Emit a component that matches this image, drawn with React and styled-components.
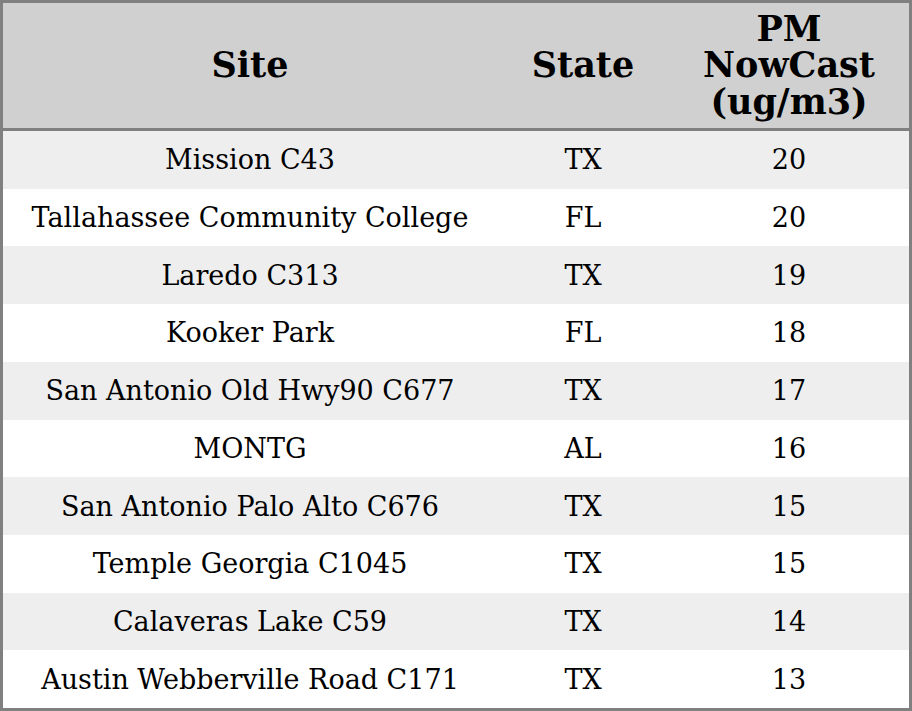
import styled, { createGlobalStyle } from "styled-components";

const GlobalStyle = createGlobalStyle`
    html, body {
        margin: 0;
        padding: 0;
        background: #ffffff;
    }
`;

const rows = [
    { site: "Mission C43", state: "TX", value: 20 },
    { site: "Tallahassee Community College", state: "FL", value: 20 },
    { site: "Laredo C313", state: "TX", value: 19 },
    { site: "Kooker Park", state: "FL", value: 18 },
    { site: "San Antonio Old Hwy90 C677", state: "TX", value: 17 },
    { site: "MONTG", state: "AL", value: 16 },
    { site: "San Antonio Palo Alto C676", state: "TX", value: 15 },
    { site: "Temple Georgia C1045", state: "TX", value: 15 },
    { site: "Calaveras Lake C59", state: "TX", value: 14 },
    { site: "Austin Webberville Road C171", state: "TX", value: 13 },
];

const Table = styled.div`
    box-sizing: border-box;
    width: 912px;
    height: 711px;
    border: 3px solid #808080;
    display: grid;
    grid-template-columns: 494px 172px 240px;
    grid-template-rows: 128px repeat(10, 1fr);
    font-family: "DejaVu Serif", serif;
    color: #000;
`;

const HeadCell = styled.div`
    background: #d0d0d0;
    border-bottom: 3px solid #808080;
    display: flex;
    align-items: center;
    justify-content: center;
    text-align: center;
    font-weight: bold;
    font-size: 35px;
    line-height: 36.5px;
`;

const Cell = styled.div`
    background: ${(p) => (p.$shaded ? "#eeeeee" : "#ffffff")};
    display: flex;
    align-items: center;
    justify-content: center;
    font-size: 27px;
`;

export default function App() {
    return (
        <>
            <GlobalStyle />
            <Table>
                <HeadCell>Site</HeadCell>
                <HeadCell>State</HeadCell>
                <HeadCell>
                    PM
                    <br />
                    NowCast
                    <br />
                    (ug/m3)
                </HeadCell>
                {rows.map((r, i) => (
                    <>
                        <Cell key={`s${i}`} $shaded={i % 2 === 0}>{r.site}</Cell>
                        <Cell key={`t${i}`} $shaded={i % 2 === 0}>{r.state}</Cell>
                        <Cell key={`v${i}`} $shaded={i % 2 === 0}>{r.value}</Cell>
                    </>
                ))}
            </Table>
        </>
    );
}
